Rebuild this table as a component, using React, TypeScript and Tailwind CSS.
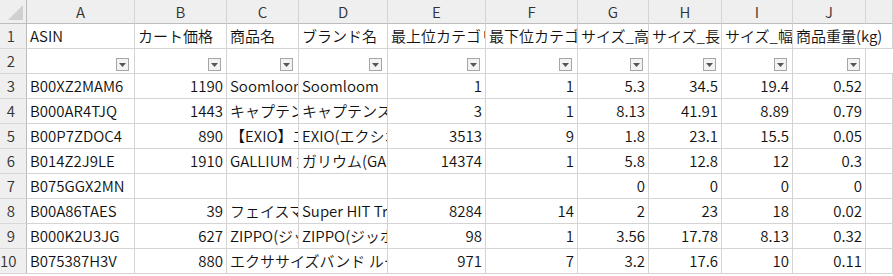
type Cell = { v?: string; r?: boolean; span?: boolean };

const letters = ["A", "B", "C", "D", "E", "F", "G", "H", "I", "J", ""];

const header: Cell[] = [
  { v: "ASIN" },
  { v: "カート価格" },
  { v: "商品名" },
  { v: "ブランド名" },
  { v: "最上位カテゴリ" },
  { v: "最下位カテゴリ" },
  { v: "サイズ_高さ" },
  { v: "サイズ_長さ" },
  { v: "サイズ_幅" },
  { v: "商品重量(kg)", span: true },
];

const rows: string[][] = [
  ["B00XZ2MAM6", "1190", "Soomloom", "Soomloom", "1", "1", "5.3", "34.5", "19.4", "0.52"],
  ["B000AR4TJQ", "1443", "キャプテンスタッグ(CAPTAIN STAG)", "キャプテンスタッグ(CAPTAIN STAG)", "3", "1", "8.13", "41.91", "8.89", "0.79"],
  ["B00P7ZDOC4", "890", "【EXIO】エクシオ", "EXIO(エクシオ)", "3513", "9", "1.8", "23.1", "15.5", "0.05"],
  ["B014Z2J9LE", "1910", "GALLIUM ガリウム", "ガリウム(GALLIUM)", "14374", "1", "5.8", "12.8", "12", "0.3"],
  ["B075GGX2MN", "", "", "", "", "", "0", "0", "0", "0"],
  ["B00A86TAES", "39", "フェイスマスク", "Super HIT Trading", "8284", "14", "2", "23", "18", "0.02"],
  ["B000K2U3JG", "627", "ZIPPO(ジッポー)", "ZIPPO(ジッポー)", "98", "1", "3.56", "17.78", "8.13", "0.32"],
];

const grid =
  "grid grid-cols-[27px_108px_92px_72px_89px_98px_92px_71px_73px_71px_73px_27px]";
const cellBase =
  "h-[25px] border-r border-b border-[#d4d4d4] px-[3px] leading-[24px] whitespace-nowrap overflow-hidden text-[#111]";
const rowHead =
  "h-[25px] border-r border-b border-r-[#bdbdbd] border-b-[#d8d8d8] bg-[#efefef] text-right pr-[11px] leading-[24px] text-[#333]";

function FilterButton() {
  return (
    <div className="w-[13px] h-[13px] border border-[#a6a6a6] bg-[#f3f3f3] flex items-center justify-center">
      <svg width="7" height="4" viewBox="0 0 7 4">
        <path d="M0 0H7L3.5 4Z" fill="#555" />
      </svg>
    </div>
  );
}

function Num({ n }: { n: number }) {
  return <div className={rowHead}>{n}</div>;
}

export default function App() {
  return (
    <div className="w-[893px] h-[276px] overflow-hidden bg-white font-['Noto_Sans_CJK_JP',sans-serif] font-[350] text-[15px]">
      {/* column letters */}
      <div className={grid}>
        <div className="relative h-[24px] border-r border-b border-r-[#bdbdbd] border-b-[#bdbdbd] bg-[#efefef]">
          <svg className="absolute right-[3px] bottom-[3px]" width="15" height="15" viewBox="0 0 15 15">
            <path d="M15 0V15H0Z" fill="#d0d0d0" />
          </svg>
        </div>
        {letters.map((l, i) => (
          <div
            key={i}
            className="h-[24px] border-r border-b border-r-[#d5d5d5] border-b-[#bdbdbd] bg-[#efefef] text-center leading-[23px] text-[#333]"
          >
            {l}
          </div>
        ))}
      </div>

      {/* row 1: titles */}
      <div className={grid}>
        <Num n={1} />
        {header.map((c, i) => (
          <div key={i} className={`${cellBase} ${c.span ? "col-span-2" : ""}`}>
            {c.v}
          </div>
        ))}
      </div>

      {/* row 2: autofilter */}
      <div className={grid}>
        <Num n={2} />
        {header.map((_, i) => (
          <div key={i} className="h-[25px] border-r border-b border-[#d4d4d4] flex items-end justify-end pr-[5px] pb-[2px]">
            <FilterButton />
          </div>
        ))}
        <div className="h-[25px] border-b border-[#d4d4d4]" />
      </div>

      {rows.map((r, ri) => (
        <div key={ri} className={grid}>
          <Num n={ri + 3} />
          {r.map((v, ci) => (
            <div key={ci} className={`${cellBase} ${ci === 0 || (ci >= 2 && ci <= 3) ? "" : "text-right"}`}>
              {v}
            </div>
          ))}
          <div className={cellBase} />
        </div>
      ))}

      {/* row 10: product name spills over the empty brand cell */}
      <div className={grid}>
        <Num n={10} />
        <div className={cellBase}>B075387H3V</div>
        <div className={`${cellBase} text-right`}>880</div>
        <div className={`${cellBase} col-span-2`}>エクササイズバンド ループバンド</div>
        <div className={`${cellBase} text-right`}>971</div>
        <div className={`${cellBase} text-right`}>7</div>
        <div className={`${cellBase} text-right`}>3.2</div>
        <div className={`${cellBase} text-right`}>17.6</div>
        <div className={`${cellBase} text-right`}>10</div>
        <div className={`${cellBase} text-right`}>0.11</div>
        <div className={cellBase} />
      </div>
    </div>
  );
}
